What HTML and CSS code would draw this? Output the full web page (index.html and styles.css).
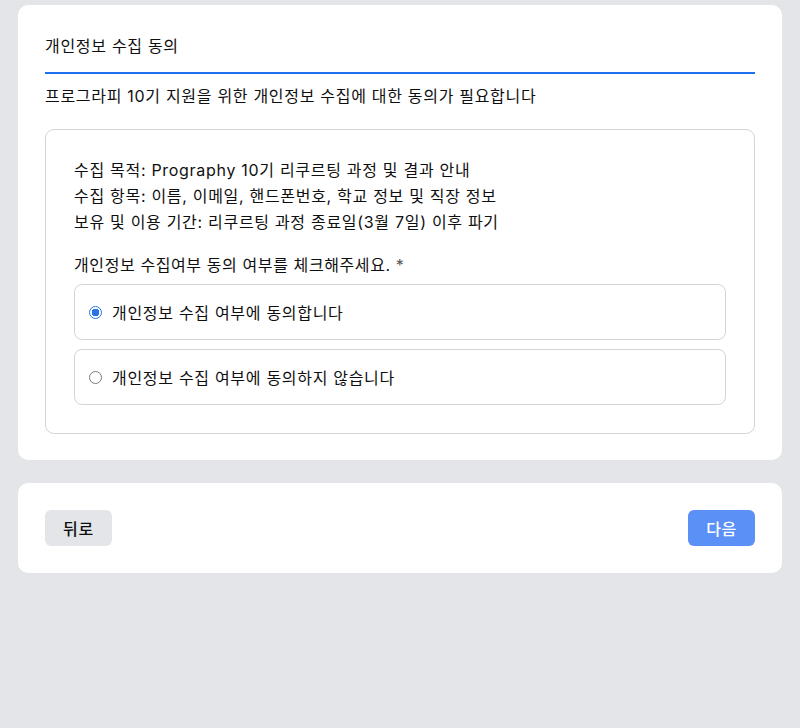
FILE: index.html
```html
<!DOCTYPE html>
<html lang="ko">
<head>
<meta charset="utf-8">
<title>개인정보 수집 동의</title>
<link rel="stylesheet" href="styles.css">
</head>
<body>
<main class="page">
  <section class="card">
    <h1 class="title">개인정보 수집 동의</h1>
    <p class="desc">프로그라피 10기 지원을 위한 개인정보 수집에 대한 동의가 필요합니다</p>
    <div class="box">
      <p class="info">수집 목적: Prography 10기 리쿠르팅 과정 및 결과 안내<br>수집 항목: 이름, 이메일, 핸드폰번호, 학교 정보 및 직장 정보<br>보유 및 이용 기간: 리쿠르팅 과정 종료일(3월 7일) 이후 파기</p>
      <p class="question">개인정보 수집여부 동의 여부를 체크해주세요. <span class="req">*</span></p>
      <div class="options">
        <label class="option"><input type="radio" name="agree" class="radio" checked><span>개인정보 수집 여부에 동의합니다</span></label>
        <label class="option"><input type="radio" name="agree" class="radio"><span>개인정보 수집 여부에 동의하지 않습니다</span></label>
      </div>
    </div>
  </section>
  <section class="card footer">
    <button class="btn btn-back" type="button">뒤로</button>
    <button class="btn btn-next" type="button">다음</button>
  </section>
</main>
</body>
</html>
```
FILE: styles.css
```css
html, body {
  margin: 0;
  padding: 0;
  background: #e3e5e9;
}
body {
  font-family: Inter, "Noto Sans CJK KR", sans-serif;
  color: #0f0f10;
  height: 728px;
}
.page {
  padding: 5px 18px;
  display: flex;
  flex-direction: column;
  gap: 23px;
}
.card {
  background: #ffffff;
  border-radius: 10px;
  padding: 30px 27px 26px;
}
.title {
  margin: 0;
  font-size: 16px;
  font-weight: 400;
  letter-spacing: 0.7px;
  line-height: 22px;
  padding-bottom: 15px;
  border-bottom: 2px solid #1f6ff0;
}
.desc {
  margin: 10px 0 21px;
  font-size: 16px;
  line-height: 24px;
  letter-spacing: 0.7px;
}
.box {
  border: 1px solid #d3d4d8;
  border-radius: 9px;
  padding: 27px 28px 28px;
}
.info {
  margin: 0;
  font-size: 16px;
  line-height: 26px;
  letter-spacing: 0.7px;
}
.question {
  margin: 17px 0 6px;
  font-size: 16px;
  line-height: 26px;
  letter-spacing: 0.6px;
}
.req {
  color: #555;
}
.options {
  display: flex;
  flex-direction: column;
  gap: 9px;
}
.option {
  display: flex;
  align-items: center;
  height: 54px;
  border: 1px solid #d3d4d8;
  border-radius: 8px;
  padding: 0 14px;
  font-size: 16px;
  letter-spacing: 0.7px;
  gap: 10px;
}
.radio {
  appearance: none;
  -webkit-appearance: none;
  margin: 0;
  width: 13px;
  height: 13px;
  border: 1px solid #7d7d80;
  border-radius: 50%;
  box-sizing: border-box;
  background: #fff;
  flex: none;
}
.radio:checked {
  border: 1.5px solid #2a73ea;
  background: radial-gradient(circle, #2a73ea 0 3.6px, #fff 4px);
}
.footer {
  display: flex;
  justify-content: space-between;
  align-items: center;
  padding: 27px 27px;
}
.btn {
  font-family: Inter, "Noto Sans CJK KR", sans-serif;
  font-size: 16px;
  font-weight: 500;
  letter-spacing: 0.7px;
  height: 36px;
  border: none;
  border-radius: 6px;
  padding: 0 18px;
}
.btn-back {
  background: #e3e5e9;
  color: #0f0f10;
}
.btn-next {
  background: #5b91f6;
  color: #ffffff;
}
```
